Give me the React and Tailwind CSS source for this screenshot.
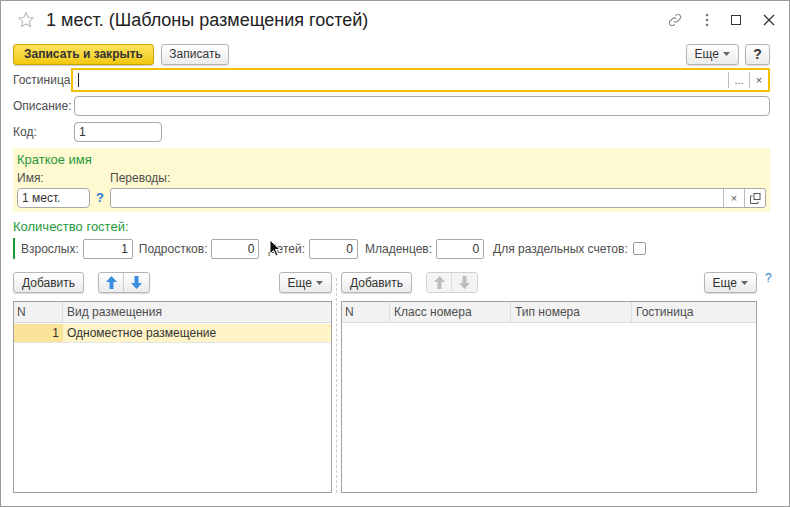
const Btn = ({ children, className = "" }) => (
  <button className={`h-[21px] px-2 rounded-[3px] border border-[#b5b5b5] bg-gradient-to-b from-white to-[#ebebeb] text-[12px] text-[#333] shadow-[0_1px_1px_rgba(0,0,0,0.15)] flex items-center gap-1 shrink-0 ${className}`}>
    {children}
  </button>
);

const Caret = ({ c = "#666" }) => (
  <svg width="7" height="4" viewBox="0 0 7 4"><path d="M0 0h7L3.5 4z" fill={c} /></svg>
);

const Arrow = ({ up, c }) => (
  <svg width="11" height="13" viewBox="0 0 11 13">
    {up ? <path d="M5.5 0L11 6H7.5v7h-4V6H0z" fill={c} /> : <path d="M5.5 13L11 7H7.5V0h-4v7H0z" fill={c} />}
  </svg>
);

const Input = ({ className = "", value = "", right = false }) => (
  <div className={`h-[20px] border border-[#a8a8a8] rounded-[2px] bg-white text-[12px] text-[#333] px-1 flex items-center shrink-0 ${right ? "justify-end" : ""} ${className}`}>{value}</div>
);

export default function App() {
  return (
    <div className="w-[790px] h-[507px] bg-white border border-[#9a9a9a] font-[Liberation_Sans] text-[12px] text-[#4d4d4d] relative overflow-hidden flex flex-col">
      <div className="h-[38px] flex items-center pl-[16px] pr-[14px] shrink-0">
        <svg width="18" height="18" viewBox="0 0 24 24" fill="none" stroke="#bdbdbd" strokeWidth="1.5"><path d="M12 2.5l2.9 6.2 6.6.7-5 4.5 1.4 6.6L12 17.2l-5.9 3.3 1.4-6.6-5-4.5 6.6-.7z" /></svg>
        <span className="ml-[11px] text-[18px] text-[#222]">1 мест. (Шаблоны размещения гостей)</span>
        <div className="ml-auto flex items-center gap-[22px] text-[#777]">
          <svg width="16" height="16" viewBox="0 0 24 24" fill="none" stroke="#888" strokeWidth="1.6"><path d="M10 14a4 4 0 0 0 5.7 0l3.5-3.5a4 4 0 0 0-5.7-5.7l-1 1" /><path d="M14 10a4 4 0 0 0-5.7 0l-3.5 3.5a4 4 0 0 0 5.7 5.7l1-1" /></svg>
          <svg width="4" height="14" viewBox="0 0 4 14"><circle cx="2" cy="2" r="1.3" fill="#777"/><circle cx="2" cy="7" r="1.3" fill="#777"/><circle cx="2" cy="12" r="1.3" fill="#777"/></svg>
          <div className="w-[10px] h-[10px] border-[1.5px] border-[#333]" />
          <svg width="12" height="12" viewBox="0 0 12 12" stroke="#333" strokeWidth="1.3"><path d="M1 1l10 10M11 1L1 11" /></svg>
        </div>
      </div>

      <div className="pl-[12px] pr-[19px] flex items-center h-[22px] mt-[4px]">
        <button className="h-[21px] w-[141px] rounded-[3px] border border-[#c9a400] bg-gradient-to-b from-[#ffe45a] to-[#f2c800] text-[12px] font-bold text-[#333] shadow-[0_1px_1px_rgba(0,0,0,0.2)]">Записать и закрыть</button>
        <Btn className="ml-[7px] w-[68px] justify-center">Записать</Btn>
        <Btn className="ml-auto">Еще <Caret /></Btn>
        <Btn className="ml-[6px] w-[25px] justify-center font-bold text-[14px] text-[#333]">?</Btn>
      </div>

      <div className="pl-[12px] pr-[19px] flex items-center mt-[3px] h-[24px]">
        <span className="w-[58px] shrink-0">Гостиница:</span>
        <div className="flex-1 h-[24px] border-2 border-[#f2c200] bg-white flex items-center">
          <div className="w-px h-[14px] bg-[#222] ml-[5px]" />
          <div className="ml-auto flex h-full items-center text-[#555]">
            <div className="w-px h-[16px] bg-[#bbb]" />
            <span className="w-[20px] text-center text-[11px]">...</span>
            <div className="w-px h-[16px] bg-[#bbb]" />
            <span className="w-[18px] text-center text-[11px]">×</span>
          </div>
        </div>
      </div>

      <div className="pl-[12px] pr-[19px] flex items-center mt-[4px]">
        <span className="w-[61px] shrink-0">Описание:</span>
        <Input className="flex-1 rounded-[4px] shrink" />
      </div>
      <div className="pl-[12px] flex items-center mt-[6px]">
        <span className="w-[61px] shrink-0">Код:</span>
        <Input className="w-[88px] rounded-[4px]" value="1" />
      </div>

      <div className="ml-[12px] mr-[19px] mt-[6px] bg-[#fff9d1] h-[64px] px-[4px] pt-[4px] shrink-0">
        <div className="text-[13px] text-[#1f9a3a] leading-[16px]">Краткое имя</div>
        <div className="flex mt-[3px] leading-[14px]">
          <div className="w-[93px]">Имя:</div>
          <div>Переводы:</div>
        </div>
        <div className="flex items-center mt-[3px]">
          <Input className="w-[73px] rounded-[4px]" value="1 мест." />
          <span className="w-[20px] text-center text-[#2b7bd6] font-bold text-[13px]">?</span>
          <div className="flex-1 h-[20px] border border-[#a8a8a8] rounded-[3px] bg-white flex justify-end">
            <div className="w-[21px] border-l border-[#bbb] flex items-center justify-center text-[11px] text-[#555]">×</div>
            <div className="w-[21px] border-l border-[#bbb] flex items-center justify-center">
              <svg width="11" height="11" viewBox="0 0 11 11" fill="none" stroke="#555"><rect x="4" y="0.5" width="6" height="6" /><path d="M2.5 3H0.5v7.5H8V8.5" /></svg>
            </div>
          </div>
        </div>
      </div>

      <div className="px-[12px] mt-[7px] text-[13px] leading-[16px] text-[#1f9a3a]">Количество гостей:</div>
      <div className="mx-[12px] mt-[3px] border-l-2 border-[#1f9a3a] pl-[6px] flex items-center h-[21px]">
        <span>Взрослых:</span>
        <Input className="ml-[4px] w-[50px]" value="1" right />
        <span className="ml-[6px]">Подростков:</span>
        <Input className="ml-[4px] w-[48px]" value="0" right />
        <span className="ml-[9px]">Детей:</span>
        <Input className="ml-[4px] w-[49px]" value="0" right />
        <span className="ml-[7px]">Младенцев:</span>
        <Input className="ml-[4px] w-[48px]" value="0" right />
        <span className="ml-[9px]">Для раздельных счетов:</span>
        <div className="ml-[5px] w-[13px] h-[13px] border border-[#999] rounded-[2px] bg-white" />
      </div>

      <div className="flex px-[12px] mt-[13px] flex-1 pb-[13px]">
        <div className="w-[319px] flex flex-col">
          <div className="flex items-center h-[21px]">
            <Btn>Добавить</Btn>
            <div className="ml-[14px] flex h-[21px] rounded-[3px] border border-[#b5b5b5] bg-gradient-to-b from-white to-[#ebebeb] shadow-[0_1px_1px_rgba(0,0,0,0.15)]">
              <div className="w-[25px] flex items-center justify-center border-r border-[#ccc]"><Arrow up c="#3a8de0" /></div>
              <div className="w-[25px] flex items-center justify-center"><Arrow c="#3a8de0" /></div>
            </div>
            <Btn className="ml-auto">Еще <Caret /></Btn>
          </div>
          <div className="mt-[8px] flex-1 border border-[#a0a0a0] bg-white">
            <div className="flex h-[21px] bg-[#f2f2f2] border-b border-[#ddd]">
              <div className="w-[49px] border-r border-[#ddd] pl-[3px] flex items-center">N</div>
              <div className="flex-1 pl-[4px] flex items-center">Вид размещения</div>
            </div>
            <div className="flex h-[19px] border-b border-[#e5e5e5] mt-px">
              <div className="w-[49px] bg-[#fbe39a] pr-[4px] flex items-center justify-end text-[#333]">1</div>
              <div className="flex-1 bg-[#fff3c8] pl-[4px] flex items-center text-[#333]">Одноместное размещение</div>
            </div>
          </div>
        </div>

        <div className="w-px mx-[4px] border-l border-dashed border-[#ccc] mt-[6px]" />

        <div className="w-[416px] flex flex-col">
          <div className="flex items-center h-[21px]">
            <Btn>Добавить</Btn>
            <div className="ml-[14px] flex h-[21px] rounded-[3px] border border-[#d0d0d0] bg-[#f4f4f4]">
              <div className="w-[25px] flex items-center justify-center border-r border-[#ddd]"><Arrow up c="#bdbdbd" /></div>
              <div className="w-[25px] flex items-center justify-center"><Arrow c="#bdbdbd" /></div>
            </div>
            <Btn className="ml-auto">Еще <Caret /></Btn>
          </div>
          <div className="mt-[8px] flex-1 border border-[#a0a0a0] bg-white">
            <div className="flex h-[21px] bg-[#f2f2f2] border-b border-[#ddd]">
              <div className="w-[48px] border-r border-[#ddd] pl-[3px] flex items-center">N</div>
              <div className="w-[121px] border-r border-[#ddd] pl-[4px] flex items-center">Класс номера</div>
              <div className="w-[121px] border-r border-[#ddd] pl-[4px] flex items-center">Тип номера</div>
              <div className="flex-1 pl-[4px] flex items-center">Гостиница</div>
            </div>
          </div>
        </div>
        <span className="ml-[8px] text-[#2b7bd6] text-[12px] -mt-[3px]">?</span>
      </div>

      <svg className="absolute left-[268px] top-[238px]" width="12" height="18" viewBox="0 0 12 18"><path d="M1 1v14l3.5-3.5 2.5 5.5 2-1-2.5-5.5H11z" fill="#111" stroke="#fff" strokeWidth="1" /></svg>
    </div>
  );
}
